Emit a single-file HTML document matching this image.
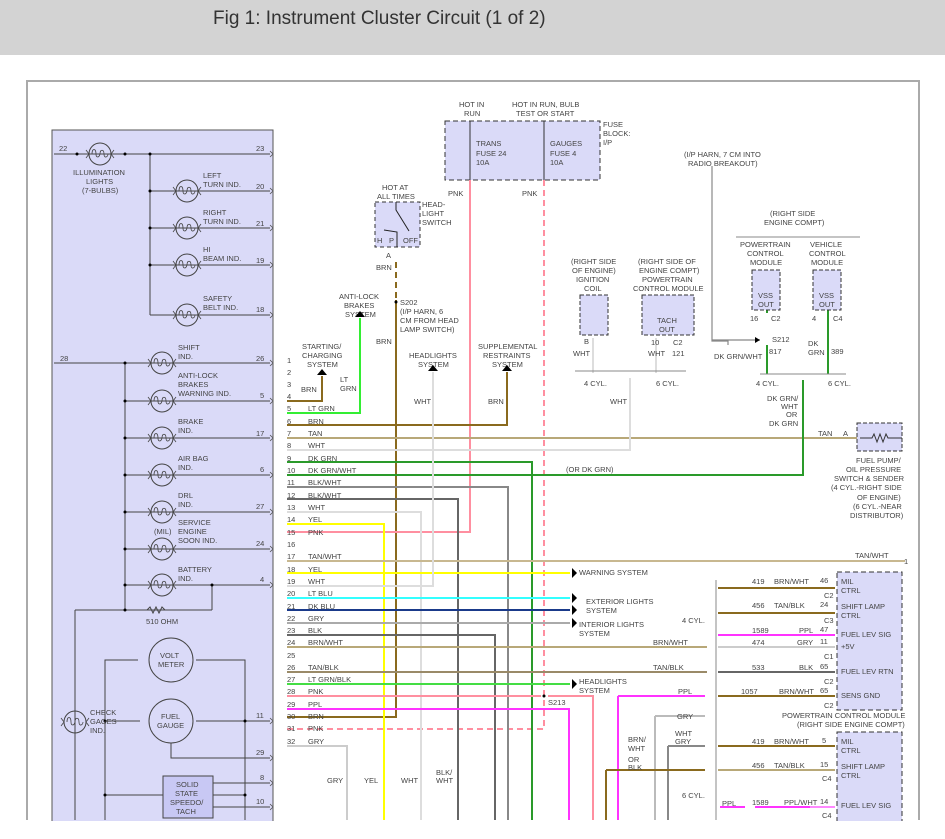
<!DOCTYPE html>
<html><head><meta charset="utf-8"><style>
html,body{margin:0;padding:0;background:#fff;width:945px;height:839px;overflow:hidden}
.hd{position:absolute;left:0;top:0;width:945px;height:55px;background:#d3d3d3}
.hd span{position:absolute;left:213px;top:8px;font:19px "Liberation Sans",sans-serif;color:#333}
svg{position:absolute;left:0;top:0}
text{font-family:"Liberation Sans",sans-serif;font-size:7.5px;fill:#444}
</style></head><body>
<div class="hd"><span>Fig 1: Instrument Cluster Circuit (1 of 2)</span></div>
<svg width="945" height="839" viewBox="0 0 945 839">
<defs>
<g id="bulb"><circle r="11" fill="none" stroke="#444" stroke-width="1"/><path d="M-11,0 l-3,-4 M-11,0 l-3,4 M11,0 l3,-4 M11,0 l3,4 M-8,0 c0,-6 4,-6 4,0 c0,4 3,4 4,0 c0,-5 4,-5 4,0 c0,5 4,3 4,0" fill="none" stroke="#444" stroke-width="0.8"/></g>
<path id="pin" d="M0,-3 l3,3 l-3,3" fill="none" stroke="#555" stroke-width="0.8"/>
<path id="arr" d="M0,0 l-5,-5 v10 z" fill="#000"/>
<path id="uarr" d="M0,0 l-5,6 h10 z" fill="#000"/>
</defs>
<!-- frame -->
<path d="M27,820 V81 H919 V820" fill="none" stroke="#aaa" stroke-width="2"/>
<!-- cluster box -->
<rect x="52" y="130" width="221" height="700" fill="#dadaf8" stroke="#555" stroke-width="1"/>
<g stroke="#444" stroke-width="1" fill="none">
<path d="M54,154 H270 M150,154 V315 M150,191 H270 M150,228 H270 M150,265 H270 M150,315 H270"/>
<path d="M54,363 H270 M125,363 V610 M125,401 H270 M125,438 H270 M125,475 H270 M125,512 H270 M125,549 H270 M125,585 H270 M75,610 H212 M212,585 V610"/>
<path d="M75,610 V820 M138,660 H105 V820 M138,660 M196,660 H245 V820 M105,721 H140 M196,721 H270 M171,730 V758 H270 M105,795 H163 M213,783 H270 M213,795 H245 M213,807 H270"/>
</g>
<path d="M147,610 l3,-3 l3,6 l3,-6 l3,6 l3,-6 l3,3" fill="none" stroke="#444"/>
<g fill="#000"><circle cx="77" cy="154" r="1.5"/><circle cx="125" cy="154" r="1.5"/><circle cx="150" cy="154" r="1.5"/><circle cx="150" cy="191" r="1.5"/><circle cx="150" cy="228" r="1.5"/><circle cx="150" cy="265" r="1.5"/><circle cx="125" cy="363" r="1.5"/><circle cx="125" cy="401" r="1.5"/><circle cx="125" cy="438" r="1.5"/><circle cx="125" cy="475" r="1.5"/><circle cx="125" cy="512" r="1.5"/><circle cx="125" cy="549" r="1.5"/><circle cx="125" cy="585" r="1.5"/><circle cx="212" cy="585" r="1.5"/><circle cx="125" cy="610" r="1.5"/><circle cx="105" cy="721" r="1.5"/><circle cx="245" cy="721" r="1.5"/><circle cx="105" cy="795" r="1.5"/><circle cx="245" cy="795" r="1.5"/></g>
<g fill="#dadaf8"><use href="#bulb" x="100" y="154"/><use href="#bulb" x="187" y="191"/><use href="#bulb" x="187" y="228"/><use href="#bulb" x="187" y="265"/><use href="#bulb" x="187" y="315"/><use href="#bulb" x="162" y="363"/><use href="#bulb" x="162" y="401"/><use href="#bulb" x="162" y="438"/><use href="#bulb" x="162" y="475"/><use href="#bulb" x="162" y="512"/><use href="#bulb" x="162" y="549"/><use href="#bulb" x="162" y="585"/><use href="#bulb" x="75" y="722"/></g>
<circle cx="171" cy="660" r="22" fill="#dadaf8" stroke="#444"/>
<circle cx="171" cy="721" r="22" fill="#dadaf8" stroke="#444"/>
<rect x="163" y="776" width="50" height="42" fill="#c8c8f4" stroke="#444"/>
<g><use href="#pin" x="270" y="154"/><use href="#pin" x="270" y="191"/><use href="#pin" x="270" y="228"/><use href="#pin" x="270" y="265"/><use href="#pin" x="270" y="315"/><use href="#pin" x="270" y="363"/><use href="#pin" x="270" y="401"/><use href="#pin" x="270" y="438"/><use href="#pin" x="270" y="475"/><use href="#pin" x="270" y="512"/><use href="#pin" x="270" y="549"/><use href="#pin" x="270" y="585"/><use href="#pin" x="270" y="721"/><use href="#pin" x="270" y="758"/><use href="#pin" x="270" y="783"/><use href="#pin" x="270" y="807"/></g>
<g>
<text x="59" y="151">22</text><text x="256" y="151">23</text>
<text x="73" y="175">ILLUMINATION</text><text x="86" y="184">LIGHTS</text><text x="82" y="193">(7-BULBS)</text>
<text x="203" y="178">LEFT</text><text x="203" y="187">TURN IND.</text><text x="256" y="189">20</text>
<text x="203" y="215">RIGHT</text><text x="203" y="224">TURN IND.</text><text x="256" y="226">21</text>
<text x="203" y="252">HI</text><text x="203" y="261">BEAM IND.</text><text x="256" y="263">19</text>
<text x="203" y="301">SAFETY</text><text x="203" y="310">BELT IND.</text><text x="256" y="312">18</text>
<text x="60" y="361">28</text>
<text x="178" y="350">SHIFT</text><text x="178" y="359">IND.</text><text x="256" y="361">26</text>
<text x="178" y="378">ANTI-LOCK</text><text x="178" y="387">BRAKES</text><text x="178" y="396">WARNING IND.</text><text x="260" y="398">5</text>
<text x="178" y="424">BRAKE</text><text x="178" y="433">IND.</text><text x="256" y="436">17</text>
<text x="178" y="461">AIR BAG</text><text x="178" y="470">IND.</text><text x="260" y="472">6</text>
<text x="178" y="498">DRL</text><text x="178" y="507">IND.</text><text x="256" y="509">27</text>
<text x="154" y="534">(MIL)</text><text x="178" y="525">SERVICE</text><text x="178" y="534">ENGINE</text><text x="178" y="543">SOON IND.</text><text x="256" y="546">24</text>
<text x="178" y="572">BATTERY</text><text x="178" y="581">IND.</text><text x="260" y="582">4</text>
<text x="146" y="624">510 OHM</text>
<text x="160" y="658">VOLT</text><text x="158" y="667">METER</text>
<text x="161" y="719">FUEL</text><text x="157" y="728">GAUGE</text>
<text x="90" y="715">CHECK</text><text x="90" y="724">GAGES</text><text x="90" y="733">IND.</text>
<text x="256" y="718">11</text><text x="256" y="755">29</text><text x="260" y="780">8</text><text x="256" y="804">10</text>
<text x="176" y="787">SOLID</text><text x="175" y="796">STATE</text><text x="170" y="805">SPEEDO/</text><text x="176" y="814">TACH</text>
</g>
<!-- fuse block -->
<rect x="445" y="121" width="155" height="59" fill="#dadaf8" stroke="#333" stroke-dasharray="5,3"/>
<path d="M470,121 V180 M544,121 V180" stroke="#333"/>
<text x="459" y="107">HOT IN</text><text x="464" y="116">RUN</text>
<text x="512" y="107">HOT IN RUN, BULB</text><text x="516" y="116">TEST OR START</text>
<text x="476" y="146">TRANS</text><text x="476" y="156">FUSE 24</text><text x="476" y="165">10A</text>
<text x="550" y="146">GAUGES</text><text x="550" y="156">FUSE 4</text><text x="550" y="165">10A</text>
<text x="603" y="127">FUSE</text><text x="603" y="136">BLOCK:</text><text x="603" y="145">I/P</text>
<text x="448" y="196">PNK</text><text x="522" y="196">PNK</text>
<!-- headlight switch -->
<rect x="375" y="202" width="45" height="45" fill="#dadaf8" stroke="#333" stroke-dasharray="4,3"/>
<path d="M396,202 V210 L409,231 M384,230 L397,232 V247" stroke="#222" fill="none"/>
<text x="382" y="190">HOT AT</text><text x="377" y="199">ALL TIMES</text>
<text x="422" y="207">HEAD-</text><text x="422" y="216">LIGHT</text><text x="422" y="225">SWITCH</text>
<text x="377" y="243">H</text><text x="389" y="243">P</text><text x="403" y="243">OFF</text>
<text x="386" y="258">A</text><text x="376" y="270">BRN</text><text x="376" y="344">BRN</text>
<text x="400" y="305">S202</text><text x="400" y="314">(I/P HARN, 6</text><text x="400" y="323">CM FROM HEAD</text><text x="400" y="332">LAMP SWITCH)</text>
<!-- system labels -->
<text x="302" y="349">STARTING/</text><text x="302" y="358">CHARGING</text><text x="307" y="367">SYSTEM</text>
<text x="339" y="299">ANTI-LOCK</text><text x="344" y="308">BRAKES</text><text x="345" y="317">SYSTEM</text>
<text x="409" y="358">HEADLIGHTS</text><text x="418" y="367">SYSTEM</text>
<text x="478" y="349">SUPPLEMENTAL</text><text x="483" y="358">RESTRAINTS</text><text x="492" y="367">SYSTEM</text>
<text x="301" y="392">BRN</text><text x="340" y="382">LT</text><text x="340" y="391">GRN</text>
<text x="414" y="404">WHT</text><text x="488" y="404">BRN</text><text x="610" y="404">WHT</text>
<!-- wires -->
<g fill="none" stroke-width="2">
<path d="M396,262 V300" stroke="#8a6a1e" stroke-dasharray="6,4"/>
<path d="M396,300 V717 H287" stroke="#8a6a1e"/>
<path d="M470,180 V532 H287" stroke="#ff8fa0"/>
<path d="M544,180 V729 H287" stroke="#ff8fa0" stroke-dasharray="6,4"/>
<path d="M287,401 H322 V376" stroke="#8a6a1e"/>
<path d="M287,413 H360 V318" stroke="#33ee33"/>
<path d="M287,425 H507 V372" stroke="#8a6a1e"/>
<path d="M287,438 H875" stroke="#b8a878"/>
<path d="M287,450 H630 V378" stroke="#ddd"/>
<path d="M287,462 H532 V820" stroke="#2a9a2a"/>
<path d="M287,475 H803 V380" stroke="#2a9a2a"/>
<path d="M287,487 H508 V820" stroke="#888"/>
<path d="M287,499 H458 V820" stroke="#666"/>
<path d="M287,512 H421 V820" stroke="#ddd"/>
<path d="M287,524 H384 V820" stroke="#ffff00"/>
<path d="M287,561 H905" stroke="#c8b890"/>
<path d="M287,573 H570" stroke="#ffff00"/>
<path d="M287,586 H433 V372" stroke="#ddd"/>
<path d="M287,598 H570" stroke="#33ffff"/>
<path d="M287,610 H570" stroke="#1a3a8a"/>
<path d="M287,623 H570" stroke="#aaa"/>
<path d="M287,635 H495 V820" stroke="#666"/>
<path d="M287,647 H707" stroke="#b8a878"/>
<path d="M287,672 H707" stroke="#9a8a68"/>
<path d="M287,684 H570" stroke="#44dd44"/>
<path d="M287,696 H541 M548,696 H593 V820" stroke="#ff8fa0"/>
<path d="M287,709 H569 V820" stroke="#ff33ff"/>
<path d="M287,746 H347 V820" stroke="#ccc"/>
<path d="M718,588 H835 M718,613 H835" stroke="#8a6a1e"/>
<path d="M718,635 H835" stroke="#ff33ff"/>
<path d="M718,647 H835" stroke="#ccc"/>
<path d="M718,672 H835" stroke="#666"/>
<path d="M718,696 H835" stroke="#8a6a1e"/>
<path d="M618,696 H705 M618,696 V820" stroke="#ff33ff"/>
<path d="M655,716 H705 M655,716 V820" stroke="#bbb"/>
<path d="M668,746 H705 M668,746 V820" stroke="#888"/>
<path d="M606,770 H705 M606,770 V820" stroke="#8a6a1e"/>
<path d="M718,746 H835" stroke="#8a6a1e"/>
<path d="M718,770 H835" stroke="#b8a878"/>
<path d="M720,807 H745 M755,807 H835" stroke="#ff33ff"/>
<path d="M810,807 H835" stroke="#ff88ff"/>
<path d="M593,338 V373 M656,338 V373" stroke="#ddd"/>
<path d="M767,292 V316" stroke="#2a9a2a" stroke-dasharray="5,3"/>
<path d="M767,345 V374 M828,292 V374" stroke="#2a9a2a"/>
</g>
<g><use href="#uarr" x="322" y="369"/><use href="#uarr" x="360" y="311"/><use href="#uarr" x="433" y="365"/><use href="#uarr" x="507" y="365"/>
<use href="#arr" x="577" y="573"/><use href="#arr" x="577" y="598"/><use href="#arr" x="577" y="610"/><use href="#arr" x="577" y="623"/><use href="#arr" x="577" y="684"/></g>
<circle cx="544" cy="696" r="1.5" fill="#000"/><circle cx="396" cy="302" r="1.5" fill="#000"/>
<!-- pin labels -->
<g>
<text x="287" y="363">1</text><text x="287" y="375">2</text><text x="287" y="387">3</text><text x="287" y="399">4</text>
<text x="287" y="411">5</text><text x="308" y="411">LT GRN</text>
<text x="287" y="424">6</text><text x="308" y="424">BRN</text>
<text x="287" y="436">7</text><text x="308" y="436">TAN</text>
<text x="287" y="448">8</text><text x="308" y="448">WHT</text>
<text x="287" y="461">9</text><text x="308" y="461">DK GRN</text>
<text x="287" y="473">10</text><text x="308" y="473">DK GRN/WHT</text>
<text x="287" y="485">11</text><text x="308" y="485">BLK/WHT</text>
<text x="287" y="498">12</text><text x="308" y="498">BLK/WHT</text>
<text x="287" y="510">13</text><text x="308" y="510">WHT</text>
<text x="287" y="522">14</text><text x="308" y="522">YEL</text>
<text x="287" y="535">15</text><text x="308" y="535">PNK</text>
<text x="287" y="547">16</text>
<text x="287" y="559">17</text><text x="308" y="559">TAN/WHT</text>
<text x="287" y="572">18</text><text x="308" y="572">YEL</text>
<text x="287" y="584">19</text><text x="308" y="584">WHT</text>
<text x="287" y="596">20</text><text x="308" y="596">LT BLU</text>
<text x="287" y="609">21</text><text x="308" y="609">DK BLU</text>
<text x="287" y="621">22</text><text x="308" y="621">GRY</text>
<text x="287" y="633">23</text><text x="308" y="633">BLK</text>
<text x="287" y="645">24</text><text x="308" y="645">BRN/WHT</text>
<text x="287" y="658">25</text>
<text x="287" y="670">26</text><text x="308" y="670">TAN/BLK</text>
<text x="287" y="682">27</text><text x="308" y="682">LT GRN/BLK</text>
<text x="287" y="694">28</text><text x="308" y="694">PNK</text>
<text x="287" y="707">29</text><text x="308" y="707">PPL</text>
<text x="287" y="719">30</text><text x="308" y="719">BRN</text>
<text x="287" y="731">31</text><text x="308" y="731">PNK</text>
<text x="287" y="744">32</text><text x="308" y="744">GRY</text>
<text x="327" y="783">GRY</text><text x="364" y="783">YEL</text><text x="401" y="783">WHT</text><text x="436" y="775">BLK/</text><text x="436" y="783">WHT</text>
<text x="548" y="705">S213</text>
<text x="579" y="575">WARNING SYSTEM</text>
<text x="586" y="604">EXTERIOR LIGHTS</text><text x="586" y="613">SYSTEM</text>
<text x="579" y="627">INTERIOR LIGHTS</text><text x="579" y="636">SYSTEM</text>
<text x="579" y="684">HEADLIGHTS</text><text x="579" y="693">SYSTEM</text>
<text x="566" y="472">(OR DK GRN)</text>
<text x="682" y="623">4 CYL.</text><text x="653" y="645">BRN/WHT</text><text x="653" y="670">TAN/BLK</text><text x="678" y="694">PPL</text>
<text x="677" y="719">GRY</text><text x="675" y="736">WHT</text><text x="675" y="744">GRY</text>
<text x="628" y="742">BRN/</text><text x="628" y="751">WHT</text><text x="628" y="762">OR</text><text x="628" y="770">BLK</text>
<text x="682" y="798">6 CYL.</text><text x="722" y="806">PPL</text>
<text x="855" y="558">TAN/WHT</text><text x="904" y="564">1</text>
</g>
<!-- right top modules -->
<path d="M728,345 V341 H712 V166 M712,340 H760" fill="none" stroke="#888" stroke-width="1.2"/>
<path d="M760,340 l-5,-3 v6z" fill="#000"/>
<text x="684" y="157">(I/P HARN, 7 CM INTO</text><text x="688" y="166">RADIO BREAKOUT)</text>
<text x="770" y="216">(RIGHT SIDE</text><text x="764" y="225">ENGINE COMPT)</text>
<text x="740" y="247">POWERTRAIN</text><text x="747" y="256">CONTROL</text><text x="750" y="265">MODULE</text>
<text x="810" y="247">VEHICLE</text><text x="809" y="256">CONTROL</text><text x="811" y="265">MODULE</text>
<rect x="752" y="270" width="28" height="40" fill="#dadaf8" stroke="#333" stroke-dasharray="4,2"/>
<rect x="813" y="270" width="28" height="40" fill="#dadaf8" stroke="#333" stroke-dasharray="4,2"/>
<text x="758" y="298">VSS</text><text x="758" y="307">OUT</text><text x="819" y="298">VSS</text><text x="819" y="307">OUT</text>
<text x="750" y="321">16</text><text x="771" y="321">C2</text><text x="812" y="321">4</text><text x="833" y="321">C4</text>
<text x="772" y="342">S212</text><text x="769" y="354">817</text><text x="714" y="359">DK GRN/WHT</text>
<text x="808" y="346">DK</text><text x="808" y="355">GRN</text><text x="831" y="354">389</text>
<path d="M736,237 H860 M760,374 H846" fill="none" stroke="#888"/>
<text x="756" y="386">4 CYL.</text><text x="828" y="386">6 CYL.</text>
<text x="767" y="401">DK GRN/</text><text x="781" y="409">WHT</text><text x="786" y="417">OR</text><text x="769" y="426">DK GRN</text>
<text x="818" y="436">TAN</text><text x="843" y="436">A</text>
<rect x="857" y="423" width="45" height="28" fill="#dadaf8" stroke="#333" stroke-dasharray="4,2"/>
<path d="M860,438 H872 l2,-4 l3,8 l3,-8 l3,8 l3,-8 l2,4 H902" fill="none" stroke="#333"/>
<text x="856" y="463">FUEL PUMP/</text><text x="846" y="472">OIL PRESSURE</text><text x="834" y="481">SWITCH &amp; SENDER</text><text x="831" y="490">(4 CYL.-RIGHT SIDE</text><text x="857" y="500">OF ENGINE)</text><text x="853" y="509">(6 CYL.-NEAR</text><text x="850" y="518">DISTRIBUTOR)</text>
<text x="571" y="264">(RIGHT SIDE</text><text x="572" y="273">OF ENGINE)</text><text x="576" y="282">IGNITION</text><text x="584" y="291">COIL</text>
<rect x="580" y="295" width="28" height="40" fill="#dadaf8" stroke="#333" stroke-dasharray="4,2"/>
<text x="584" y="344">B</text><text x="573" y="356">WHT</text>
<text x="638" y="264">(RIGHT SIDE OF</text><text x="639" y="273">ENGINE COMPT)</text><text x="642" y="282">POWERTRAIN</text><text x="633" y="291">CONTROL MODULE</text>
<rect x="642" y="295" width="52" height="40" fill="#dadaf8" stroke="#333" stroke-dasharray="4,2"/>
<text x="657" y="323">TACH</text><text x="659" y="332">OUT</text>
<text x="651" y="345">10</text><text x="673" y="345">C2</text><text x="648" y="356">WHT</text><text x="672" y="356">121</text>
<path d="M575,371 H686" fill="none" stroke="#888"/>
<text x="584" y="386">4 CYL.</text><text x="656" y="386">6 CYL.</text>
<!-- right PCM -->
<path d="M716,580 V820" stroke="#888" fill="none"/>
<rect x="837" y="572" width="65" height="138" fill="#dadaf8" stroke="#333" stroke-dasharray="5,3"/>
<rect x="837" y="732" width="65" height="100" fill="#dadaf8" stroke="#333" stroke-dasharray="5,3"/>
<g>
<text x="752" y="584">419</text><text x="774" y="584">BRN/WHT</text><text x="820" y="583">46</text><text x="824" y="598">C2</text>
<text x="752" y="608">456</text><text x="774" y="608">TAN/BLK</text><text x="820" y="607">24</text><text x="824" y="623">C3</text>
<text x="752" y="633">1589</text><text x="799" y="633">PPL</text><text x="820" y="632">47</text>
<text x="752" y="645">474</text><text x="797" y="645">GRY</text><text x="820" y="644">11</text><text x="824" y="659">C1</text>
<text x="752" y="670">533</text><text x="799" y="670">BLK</text><text x="820" y="669">65</text><text x="824" y="684">C2</text>
<text x="741" y="694">1057</text><text x="779" y="694">BRN/WHT</text><text x="820" y="693">65</text><text x="824" y="708">C2</text>
<text x="841" y="584">MIL</text><text x="841" y="593">CTRL</text><text x="841" y="609">SHIFT LAMP</text><text x="841" y="618">CTRL</text>
<text x="841" y="637">FUEL LEV SIG</text><text x="841" y="649">+5V</text><text x="841" y="674">FUEL LEV RTN</text><text x="841" y="698">SENS GND</text>
<text x="782" y="718">POWERTRAIN CONTROL MODULE</text><text x="797" y="727">(RIGHT SIDE ENGINE COMPT)</text>
<text x="752" y="744">419</text><text x="774" y="744">BRN/WHT</text><text x="822" y="743">5</text>
<text x="752" y="768">456</text><text x="774" y="768">TAN/BLK</text><text x="820" y="767">15</text><text x="822" y="781">C4</text>
<text x="752" y="805">1589</text><text x="784" y="805">PPL/WHT</text><text x="820" y="804">14</text><text x="822" y="818">C4</text>
<text x="841" y="744">MIL</text><text x="841" y="753">CTRL</text><text x="841" y="769">SHIFT LAMP</text><text x="841" y="778">CTRL</text><text x="841" y="808">FUEL LEV SIG</text>
</g>
<rect x="0" y="821" width="945" height="18" fill="#fff"/>
</svg>
</body></html>
